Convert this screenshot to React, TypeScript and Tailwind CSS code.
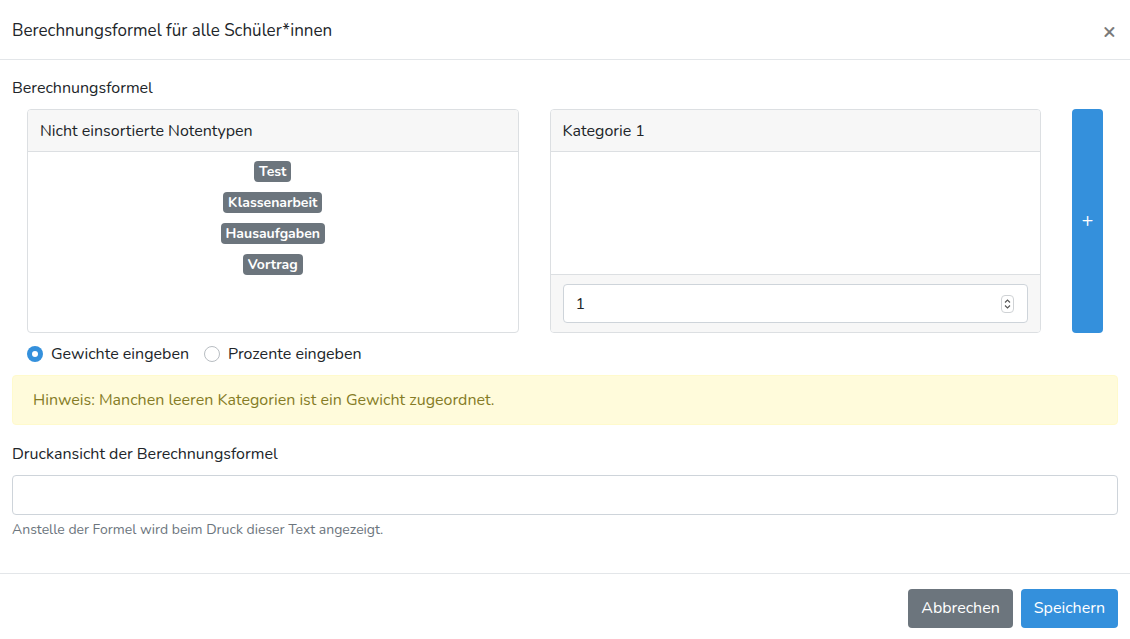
import React from "react";

const badges = ["Test", "Klassenarbeit", "Hausaufgaben", "Vortrag"];

export default function App() {
    return (
        <div className="w-[1130px] h-[639px] bg-white text-[16px] text-[#212529] font-['Nunito','Noto_Sans',sans-serif] flex flex-col">
            {/* header */}
            <div className="h-[60px] shrink-0 flex items-center justify-between px-3 border-b border-[#e3e6e9]">
                <h5 className="text-[17px] pt-[3px]">Berechnungsformel für alle Schüler*innen</h5>
                <button type="button" className="text-[#7a7a7a] text-[22px] font-bold leading-none pr-[2px] pt-[2px]">×</button>
            </div>

            {/* body */}
            <div className="flex-1 px-3 pt-[16px]">
                <label className="block leading-[22px] pt-[1px]">Berechnungsformel</label>

                <div className="flex gap-[31px] px-[15px] mt-[10px] h-[224px]">
                    <div className="flex-1 flex flex-col border border-[#dcdfe2] rounded-[4px] overflow-hidden">
                        <div className="h-[42px] shrink-0 bg-[#f7f7f7] border-b border-[#dcdfe2] flex items-center px-[12px]">
                            Nicht einsortierte Notentypen
                        </div>
                        <div className="flex-1 flex flex-col items-center pt-[9px] gap-[10px]">
                            {badges.map((b) => (
                                <span key={b}
                                      className="bg-[#6c757d] text-white font-bold text-[14px] leading-[21px] h-[21px] px-[5px] rounded-[4px]">
                                    {b}
                                </span>
                            ))}
                        </div>
                    </div>

                    <div className="flex-1 flex flex-col border border-[#dcdfe2] rounded-[4px] overflow-hidden">
                        <div className="h-[42px] shrink-0 bg-[#f7f7f7] border-b border-[#dcdfe2] flex items-center px-[12px]">
                            Kategorie 1
                        </div>
                        <div className="flex-1"></div>
                        <div className="h-[58px] shrink-0 bg-[#f7f7f7] border-t border-[#dcdfe2] px-[12px] flex items-center">
                            <div className="w-full h-[39px] bg-white border border-[#ced4da] rounded-[4px] flex items-center justify-between pl-[12px] pr-[13px]">
                                <span className="text-[16px]">1</span>
                                <div className="w-[13px] h-[18px] border border-[#cfd2d5] rounded-[4px] flex flex-col items-center justify-center">
                                    <svg width="7" height="14" viewBox="0 0 7 14" fill="none" stroke="#555" strokeWidth="1.1">
                                        <path d="M1 5.5 L3.5 3 L6 5.5" />
                                        <path d="M1 8.5 L3.5 11 L6 8.5" />
                                    </svg>
                                </div>
                            </div>
                        </div>
                    </div>

                    <button type="button"
                            className="w-[31px] shrink-0 bg-[#3490dc] rounded-[4px] text-white text-[20px] flex items-center justify-center">
                        +
                    </button>
                </div>

                <div className="flex items-center gap-[9px] pl-[15px] mt-[11px] h-[20px]">
                    <label className="flex items-center gap-[8px]">
                        <span className="w-[16px] h-[16px] rounded-full bg-[#3490dc] flex items-center justify-center">
                            <span className="w-[6px] h-[6px] rounded-full bg-white"></span>
                        </span>
                        Gewichte eingeben
                    </label>
                    <label className="flex items-center gap-[8px] ml-[6px]">
                        <span className="w-[16px] h-[16px] rounded-full border border-[#b8bdc2] bg-white"></span>
                        Prozente eingeben
                    </label>
                </div>

                <div className="mt-[11px] h-[50px] bg-[#fffbdb] border border-[#fffacc] rounded-[4px] text-[#857b26] flex items-center px-[20px]">
                    Hinweis: Manchen leeren Kategorien ist ein Gewicht zugeordnet.
                </div>

                <label className="block leading-[22px] mt-[18px]">Druckansicht der Berechnungsformel</label>
                <div className="mt-[10px] h-[40px] border border-[#ced4da] rounded-[4px] bg-white"></div>
                <p className="text-[14px] text-[#6c757d] mt-[5px] leading-[20px]">Anstelle der Formel wird beim Druck dieser Text angezeigt.</p>
            </div>

            {/* footer */}
            <div className="h-[66px] shrink-0 border-t border-[#e3e6e9] flex items-center justify-end gap-[8px] px-3 pt-[3px]">
                <button type="button" className="h-[39px] px-[13px] bg-[#6c757d] text-white rounded-[4px] text-[16px]">Abbrechen</button>
                <button type="button" className="h-[39px] px-[13px] bg-[#3490dc] text-white rounded-[4px] text-[16px]">Speichern</button>
            </div>
        </div>
    );
}
